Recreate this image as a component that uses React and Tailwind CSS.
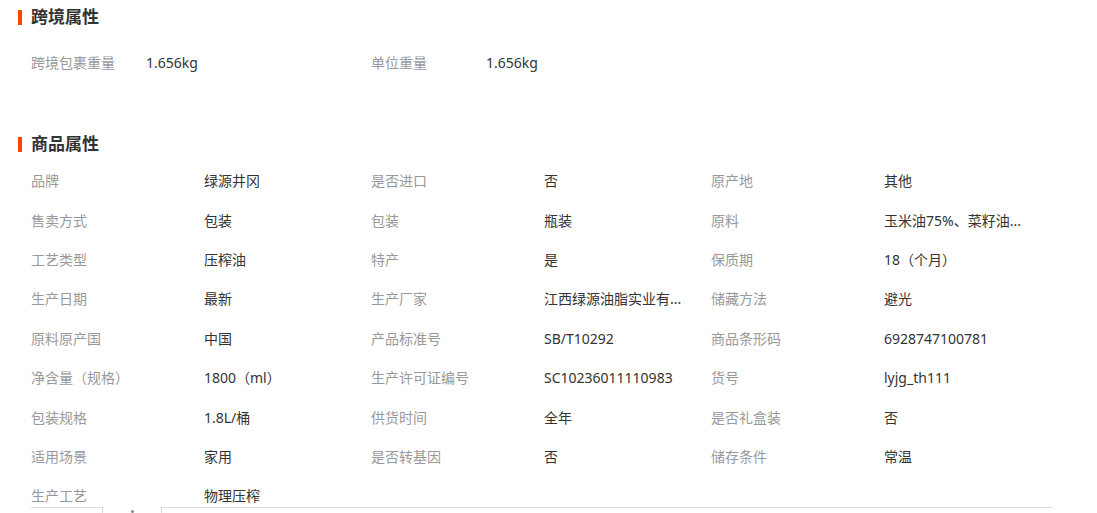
import React from 'react';

const crossBorder = [
    ['跨境包裹重量', '1.656kg'],
    ['单位重量', '1.656kg'],
];

const attrs = [
    ['品牌', '绿源井冈'],
    ['是否进口', '否'],
    ['原产地', '其他'],
    ['售卖方式', '包装'],
    ['包装', '瓶装'],
    ['原料', '玉米油75%、菜籽油...'],
    ['工艺类型', '压榨油'],
    ['特产', '是'],
    ['保质期', '18（个月）'],
    ['生产日期', '最新'],
    ['生产厂家', '江西绿源油脂实业有...'],
    ['储藏方法', '避光'],
    ['原料原产国', '中国'],
    ['产品标准号', 'SB/T10292'],
    ['商品条形码', '6928747100781'],
    ['净含量（规格）', '1800（ml）'],
    ['生产许可证编号', 'SC10236011110983'],
    ['货号', 'lyjg_th111'],
    ['包装规格', '1.8L/桶'],
    ['供货时间', '全年'],
    ['是否礼盒装', '否'],
    ['适用场景', '家用'],
    ['是否转基因', '否'],
    ['储存条件', '常温'],
    ['生产工艺', '物理压榨'],
];

function Heading({ title }) {
    return (
        <div className="flex items-center h-[34px] pl-[18px]">
            <span className="w-[4px] h-[15px] bg-[#ff4400] mr-[9px]" />
            <span className="text-[17px] font-bold text-[#333]">{title}</span>
        </div>
    );
}

function Cell({ label, value }) {
    return (
        <div className="flex items-center h-[39.4px] text-[14px]">
            <span className="w-[173px] shrink-0 text-[#999]">{label}</span>
            <span className="w-[167px] text-[#333] whitespace-nowrap">{value}</span>
        </div>
    );
}

export default function App() {
    return (
        <div
            className="w-[1097px] h-[513px] bg-white overflow-hidden"
            style={{ fontFamily: '"Noto Sans", "Noto Sans CJK SC", sans-serif' }}
        >
            <Heading title="跨境属性" />
            <div className="flex pl-[31px] mt-[9px]">
                {crossBorder.map(([l, v]) => (
                    <div key={l} className="flex items-center h-[39px] w-[340px] text-[14px]">
                        <span className="w-[115px] shrink-0 text-[#999]">{l}</span>
                        <span className="text-[#333]">{v}</span>
                    </div>
                ))}
            </div>
            <div className="mt-[45px]">
                <Heading title="商品属性" />
            </div>
            <div className="grid grid-cols-[340px_340px_340px] pl-[31px]">
                {attrs.map(([l, v]) => (
                    <Cell key={l} label={l} value={v} />
                ))}
            </div>
            <div className="relative flex items-start pl-[31px] mt-[-9px]">
                <div className="w-[72px] h-[10px] border-t border-r border-[#ddd]" />
                <div className="w-[3px] h-[3px] rounded-full bg-[#888] mt-[3px] ml-[28px]" />
                <div className="w-[891px] h-[10px] border-t border-l border-[#ddd] ml-[27px]" />
            </div>
        </div>
    );
}
